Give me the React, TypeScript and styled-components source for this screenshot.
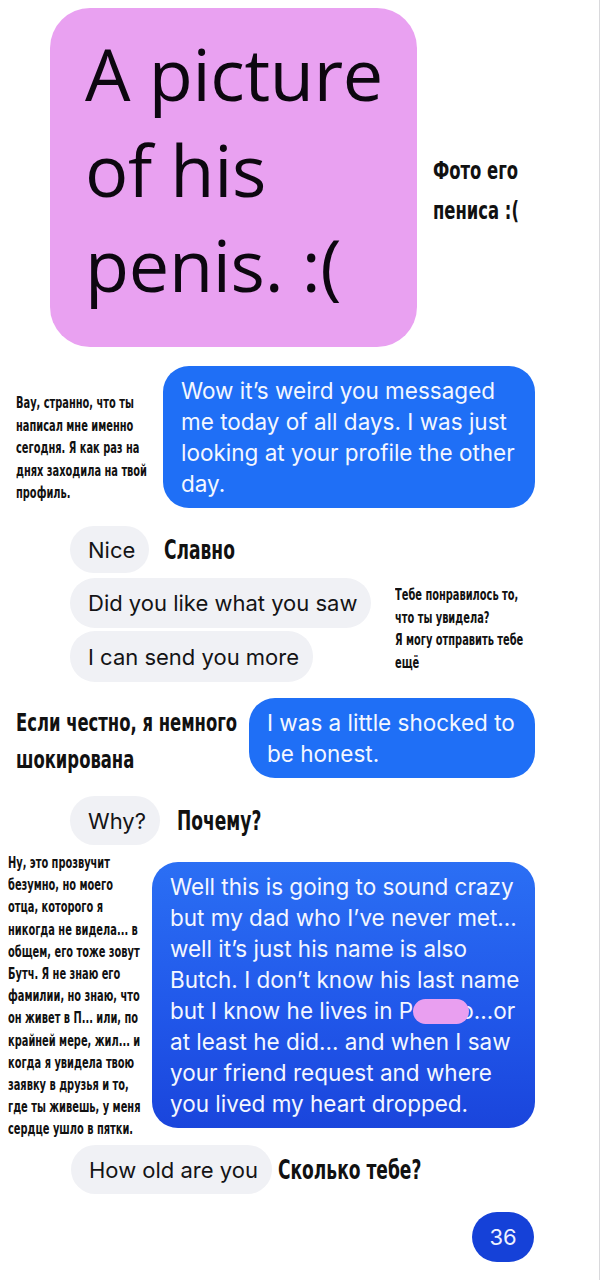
import * as React from "react";
import styled, { createGlobalStyle } from "styled-components";

const GlobalStyle = createGlobalStyle`
  html, body {
    margin: 0;
    padding: 0;
    background: #ffffff;
  }
  body {
    font-family: "Inter", "Liberation Sans", sans-serif;
  }
`;

const NOTE_FONT = `"DejaVu Sans Condensed", "Liberation Sans", sans-serif`;
const CHAT_FONT = `"Inter", "Liberation Sans", sans-serif`;

const Page = styled.div`
  position: relative;
  width: 600px;
  height: 1280px;
  box-sizing: border-box;
  padding-top: 8px;
  border-right: 1px solid #d9d9dc;
  display: flex;
  flex-direction: column;
  overflow: hidden;
`;

const Row = styled.div<{ $top: number; $left?: number; $height?: number; $align?: string }>`
  display: flex;
  align-items: ${(p) => p.$align ?? "flex-start"};
  margin-top: ${(p) => p.$top}px;
  padding-left: ${(p) => p.$left ?? 0}px;
  height: ${(p) => (p.$height ? `${p.$height}px` : "auto")};
`;

const EndRow = styled.div<{ $top: number }>`
  display: flex;
  justify-content: flex-end;
  margin-top: ${(p) => p.$top}px;
  padding-right: 65px;
`;

const PinkCard = styled.div`
  width: 367px;
  height: 339px;
  box-sizing: border-box;
  padding: 18px 0 0 35px;
  border-radius: 40px;
  background: #e9a1f1;
  font-family: "Open Sans", sans-serif;
  font-size: 72px;
  line-height: 95.5px;
  color: #0d0710;
  letter-spacing: -0.3px;
`;

// condensed caption look: squeeze the bold face horizontally
const Note = styled.div<{ $size: number; $line: number; $width?: number; $offset?: number; $gap?: number }>`
  flex: none;
  width: ${(p) => (p.$width ? `${p.$width}px` : "auto")};
  margin-top: ${(p) => p.$offset ?? 0}px;
  margin-left: ${(p) => p.$gap ?? 0}px;
  font-family: ${NOTE_FONT};
  font-weight: 700;
  font-size: ${(p) => p.$size}px;
  line-height: ${(p) => p.$line}px;
  color: #111111;
  white-space: nowrap;
  transform: scaleX(0.73);
  transform-origin: left top;
`;

const BlueBubble = styled.div<{ $width: number; $offset?: number; $gap?: number; $dark?: boolean }>`
  flex: none;
  width: ${(p) => p.$width}px;
  box-sizing: border-box;
  margin-top: ${(p) => p.$offset ?? 0}px;
  margin-left: ${(p) => p.$gap ?? 0}px;
  padding: 9px 0 9px 18px;
  border-radius: 26px;
  background: ${(p) =>
    p.$dark
      ? "linear-gradient(180deg, #2b6ff4 0%, #2158ea 55%, #1a45dc 100%)"
      : "#1f6ff6"};
  color: #f4f7ff;
  font-family: ${CHAT_FONT};
  font-size: 22.5px;
  line-height: 31px;
  white-space: nowrap;
`;

const GrayBubble = styled.div<{ $height?: number }>`
  flex: none;
  align-self: flex-start;
  display: flex;
  align-items: center;
  height: ${(p) => p.$height ?? 49}px;
  box-sizing: border-box;
  padding: 0 14px 0 18px;
  border-radius: 25px;
  background: #f0f1f5;
  color: #141416;
  font-family: ${CHAT_FONT};
  font-size: 22px;
  white-space: nowrap;
`;

const Stack = styled.div<{ $width: number }>`
  flex: none;
  width: ${(p) => p.$width}px;
  display: flex;
  flex-direction: column;
  gap: 3px;
`;

const Redact = styled.span`
  display: inline-block;
  width: 56px;
  height: 25px;
  margin: 0 -9px 0 0;
  vertical-align: -5px;
  border-radius: 13px;
  background: #e99ff0;
  position: relative;
`;

const Count = styled.div`
  width: 62px;
  height: 50px;
  border-radius: 25px;
  background: #1541d8;
  color: #eef2ff;
  display: flex;
  align-items: center;
  justify-content: center;
  font-family: ${CHAT_FONT};
  font-size: 22px;
`;

function Lines({ items }: { items: React.ReactNode[] }) {
  return (
    <>
      {items.map((t, i) => (
        <div key={i}>{t}</div>
      ))}
    </>
  );
}

export default function App() {
  return (
    <>
      <GlobalStyle />
      <Page>
        <Row $top={0} $left={50}>
          <PinkCard>
            <Lines items={["A picture", "of his", "penis. :("]} />
          </PinkCard>
          <Note $size={25} $line={40} $offset={143} $gap={16}>
            <Lines items={["Фото его", "пениса :("]} />
          </Note>
        </Row>

        <Row $top={19} $left={16}>
          <Note $size={15} $line={22.5} $width={140} $offset={26}>
            <Lines
              items={[
                "Вау, странно, что ты",
                "написал мне именно",
                "сегодня. Я как раз на",
                "днях заходила на твой",
                "профиль.",
              ]}
            />
          </Note>
          <BlueBubble $width={372} $gap={7}>
            <Lines
              items={[
                "Wow it’s weird you messaged",
                "me today of all days. I was just",
                "looking at your profile the other",
                "day.",
              ]}
            />
          </BlueBubble>
        </Row>

        <Row $top={18} $left={70} $align="center">
          <GrayBubble $height={47}>Nice</GrayBubble>
          <Note $size={26} $line={30} $gap={15}>
            Славно
          </Note>
        </Row>

        <Row $top={5} $left={70}>
          <Stack $width={325}>
            <GrayBubble $height={50}>Did you like what you saw</GrayBubble>
            <GrayBubble $height={51}>I can send you more</GrayBubble>
          </Stack>
          <Note $size={15} $line={22.5} $offset={6}>
            <Lines
              items={[
                "Тебе понравилось то,",
                "что ты увидела?",
                "Я могу отправить тебе",
                "ещё",
              ]}
            />
          </Note>
        </Row>

        <Row $top={16} $left={16}>
          <Note $size={25} $line={37} $width={233} $offset={6}>
            <Lines items={["Если честно, я немного", "шокирована"]} />
          </Note>
          <BlueBubble $width={286}>
            <Lines items={["I was a little shocked to", "be honest."]} />
          </BlueBubble>
        </Row>

        <Row $top={18} $left={70} $align="center">
          <GrayBubble $height={49}>Why?</GrayBubble>
          <Note $size={26} $line={30} $gap={17}>
            Почему?
          </Note>
        </Row>

        <Row $top={5} $left={8} $height={289}>
          <Note $size={15} $line={22.2} $width={144} $offset={2}>
            <Lines
              items={[
                "Ну, это прозвучит",
                "безумно, но моего",
                "отца, которого я",
                "никогда не видела... в",
                "общем, его тоже зовут",
                "Бутч. Я не знаю его",
                "фамилии, но знаю, что",
                "он живет в П... или, по",
                "крайней мере, жил... и",
                "когда я увидела твою",
                "заявку в друзья и то,",
                "где ты живешь, у меня",
                "сердце ушло в пятки.",
              ]}
            />
          </Note>
          <BlueBubble $width={383} $offset={12} $dark>
            <Lines
              items={[
                "Well this is going to sound crazy",
                "but my dad who I’ve never met...",
                "well it’s just his name is also",
                "Butch. I don’t know his last name",
                <>
                  but I know he lives in P<Redact />o...or
                </>,
                "at least he did... and when I saw",
                "your friend request and where",
                "you lived my heart dropped.",
              ]}
            />
          </BlueBubble>
        </Row>

        <Row $top={6} $left={71} $align="center">
          <GrayBubble $height={49}>How old are you</GrayBubble>
          <Note $size={26} $line={30} $gap={6}>
            Сколько тебе?
          </Note>
        </Row>

        <EndRow $top={18}>
          <Count>36</Count>
        </EndRow>
      </Page>
    </>
  );
}
